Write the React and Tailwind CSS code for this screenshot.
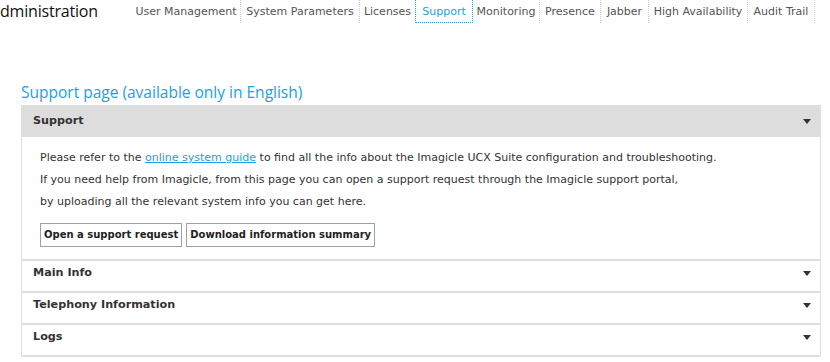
import React from 'react';

const NAV = [
  { label: 'User Management', w: 'w-[109px]' },
  { label: 'System Parameters', w: 'w-[119px]' },
  { label: 'Licenses', w: 'w-[56px]' },
  { label: 'Support', w: 'w-[58px]', active: true },
  { label: 'Monitoring', w: 'w-[67px]' },
  { label: 'Presence', w: 'w-[61px]' },
  { label: 'Jabber', w: 'w-[48px]' },
  { label: 'High Availability', w: 'w-[99px]' },
  { label: 'Audit Trail', w: 'w-[67px]' },
];

function Caret() {
  return (
    <svg width="8" height="5" viewBox="0 0 8 5" className="shrink-0">
      <path d="M0 0 H8 L4 5 Z" fill="#333" />
    </svg>
  );
}

function Row({ title }) {
  return (
    <div className="border-t-2 border-[#e0e0e0]">
      <div className="flex items-center justify-between h-[30px] pb-[6px] pl-[11px] pr-[9px]">
        <span className="text-[11.2px] font-bold text-[#333]">{title}</span>
        <Caret />
      </div>
    </div>
  );
}

export default function App() {
  return (
    <div className="w-[830px] h-[362px] bg-white overflow-hidden font-['DejaVu_Sans',sans-serif] text-[#333]">
      <div className="flex items-start h-[24px]">
        <div className="w-[132px] text-[16px] leading-[22px] tracking-[-0.2px] text-[#111] font-['Open_Sans',sans-serif]">
          dministration
        </div>
        <nav className="flex">
          {NAV.map((item) => (
            <div
              key={item.label}
              className={`${item.w} shrink-0 h-[23px] text-center whitespace-nowrap text-[11px] leading-[23px] ${
                item.active
                  ? 'text-[#1ba1e2] border border-t-0 border-dotted border-[#1ba1e2] -ml-px'
                  : 'text-[#555] border-r border-dotted border-[#cccccc]'
              }`}
            >
              {item.label}
            </div>
          ))}
        </nav>
      </div>

      <div className="ml-[21px] w-[800px] mt-[56px]">
        <h2 className="text-[15.5px] leading-[25px] text-[#1ba1e2] font-['Open_Sans',sans-serif]">
          Support page (available only in English)
        </h2>
        <div className="border-x border-b-2 border-[#e0e0e0]">
          <div className="flex items-center justify-between h-[32px] pl-[11px] pr-[9px] bg-[#dddddd]">
            <span className="text-[11.2px] font-bold text-[#333]">Support</span>
            <Caret />
          </div>
          <div className="pl-[18px] pt-[10px] pb-[12px] text-[11px] leading-[22px]">
            <p>
              Please refer to the{' '}
              <a href="#" className="text-[#1ba1e2] underline">
                online system guide
              </a>{' '}
              to find all the info about the Imagicle UCX Suite configuration and troubleshooting.
            </p>
            <p>
              If you need help from Imagicle, from this page you can open a support request through the Imagicle support portal,
            </p>
            <p>by uploading all the relevant system info you can get here.</p>
            <div className="flex gap-[4px] mt-[10px]">
              <button className="h-[24px] px-[3px] border border-[#a0a0a0] bg-white text-[10px] font-bold text-[#222]">
                Open a support request
              </button>
              <button className="h-[24px] px-[3px] border border-[#a0a0a0] bg-white text-[10px] font-bold text-[#222]">
                Download information summary
              </button>
            </div>
          </div>
          <Row title="Main Info" />
          <Row title="Telephony Information" />
          <Row title="Logs" />
        </div>
      </div>
    </div>
  );
}
